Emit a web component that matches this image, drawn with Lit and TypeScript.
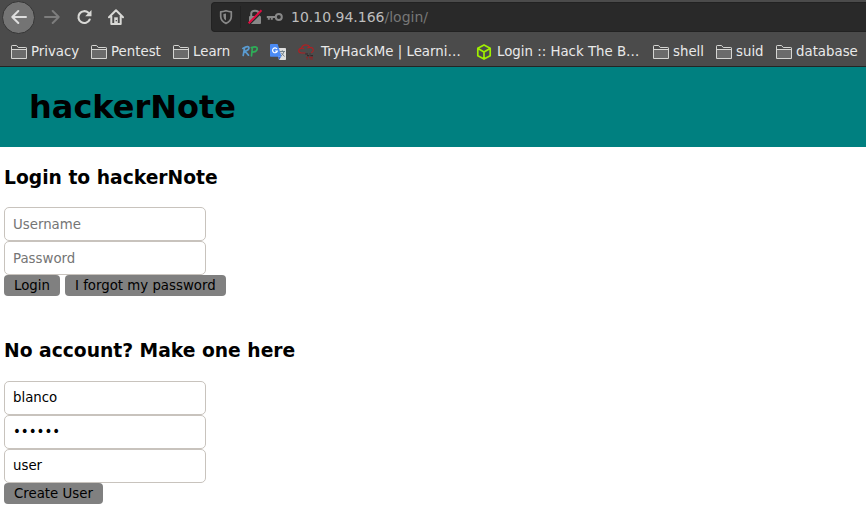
import { LitElement, html, css, svg } from "lit";
import { customElement } from "lit/decorators.js";
import { styleMap } from "lit/directives/style-map.js";

const folder = svg`<path d="M.5 13.5V1.2Q.5.5 1.2.5H5.6L7.2 2.5H14.8Q15.5 2.5 15.5 3.1V13.5Z" fill="#4b4b4b" stroke="#d5d5d2"/><path d="M1 5H15V13H1Z" fill="#6b6b6b"/><path d="M.5 4.5H15.5" stroke="#d5d5d2"/>`;

const rp = svg`<g fill="none" stroke-width="1.7" stroke-linecap="round" stroke-linejoin="round"><path d="M2.7 3.5L1.2 11.5M.8 4.4Q6.7 1.1 7 3.8Q7 6.3 2.5 7.4Q5 9 6.5 11.2" stroke="#5a9bd0"/><path d="M10.4 3.6L9.5 11.8M9.3 3.6Q15.5 1.8 15.2 5Q14.6 8 10.1 8.1" stroke="#2eae58"/></g>`;

const translate = svg`<path d="M6 4H15.2Q16 4 16 4.8V15.2Q16 16 15.2 16H9Z" fill="#e0e0e0"/><path d="M8 12.7H11L9.2 16Z" fill="#3367d6"/><path d="M.8 0H7.6L11.6 12.7H.8Q0 12.7 0 11.9V.8Q0 0 .8 0Z" fill="#4b8bf5"/><path d="M7 5A2.4 2.4 0 1 0 7.3 7H5.1" fill="none" stroke="#fff" stroke-width="1.2"/><path d="M9.8 7.5H15M12.3 6.3V7.5M14 7.6Q13 10.8 10.8 12M11.2 8.8L14.5 12.5" fill="none" stroke="#72808b"/>`;

const cloud = svg`<path d="M7.5 9H3.5Q.6 8.7.7 6.5Q.9 4.5 3.3 4.3Q4.5.8 8 .9Q10.8 1 11.9 3.4Q15.3 3.5 15.3 6.3Q15.2 8 13.2 8.8M3.3 4.3Q5 4 6 5M11.9 3.4Q10.4 3.2 9.4 4.2" fill="none" stroke="#b01f22" stroke-width="1.2"/><path d="M7.2 10H10M11.5 10H12.5M9 11.7H11.3M12.4 11.7H15" stroke="#33292a" stroke-width="1.2"/><path d="M8.2 13.3H10M11 13.3H14.8M8.6 15H10M11.5 15H15" stroke="#8e2427" stroke-width="1.2"/>`;

const cube = svg`<path d="M8 .9L14.2 4.2V11.7L8 15.1L1.8 11.7V4.2ZM2 4.4L8 7.9L14 4.4M8 7.9V15" fill="none" stroke="#9fef00" stroke-width="1.7" stroke-linejoin="round"/>`;

// Each slot is the distance from one icon to the next; gap sits between icon and label.
const bookmarks = [
  { icon: folder, label: "Privacy", slot: 80, gap: 4 },
  { icon: folder, label: "Pentest", slot: 82, gap: 4 },
  { icon: folder, label: "Learn", slot: 69, gap: 4 },
  { icon: rp, label: "", slot: 28, gap: 0 },
  { icon: translate, label: "", slot: 28, gap: 0 },
  { icon: cloud, label: "TryHackMe | Learni…", slot: 178, gap: 7 },
  { icon: cube, label: "Login :: Hack The B…", slot: 177, gap: 5 },
  { icon: folder, label: "shell", slot: 63, gap: 4 },
  { icon: folder, label: "suid", slot: 60, gap: 4 },
  { icon: folder, label: "database", slot: 90, gap: 4 },
];

@customElement("browser-chrome")
class BrowserChrome extends LitElement {
  static styles = css`
    :host { display: block; box-sizing: border-box; height: 67px; background: #4b4b4b; border-bottom: 1px solid #242424; overflow: hidden; }
    .nav { display: flex; align-items: center; height: 34px; }
    svg { display: block; flex: none; }
    .back { box-sizing: border-box; width: 33px; height: 33px; margin-left: 2px; border: 1px solid #353535; border-radius: 50%; background: #747474; display: grid; place-items: center; }
    .forward { margin-left: 9px; }
    .reload { margin-left: 16px; }
    .home { margin-left: 16px; }
    .url { box-sizing: border-box; display: flex; align-items: center; flex: 1; height: 30px; margin-left: 87px; border: 1px solid #222; border-right: 0; border-radius: 4px 0 0 4px; background: #292929; color: #777; font-size: 14px; white-space: pre; }
    .shield { margin-left: 6px; }
    .sep { width: 1px; height: 22px; margin-left: 6px; background: #222; }
    .lock { margin-left: 6px; }
    .key { margin-left: 3px; }
    .address { margin-left: 8px; }
    .host { color: #bdbdbd; }
    .marks { display: flex; height: 34px; padding-left: 11px; }
    .mark { display: flex; align-items: center; flex: none; color: #e9e9e9; font-size: 13.33px; line-height: 16px; white-space: pre; }
    .mark svg { margin-top: 2px; overflow: visible; }
    .mark span { padding-top: 2px; }
  `;
  render() {
    return html`
      <div class="nav">
        <div class="back"><svg width="16" height="16" fill="none" stroke="#dedede" stroke-width="2" stroke-linecap="round" stroke-linejoin="round"><path d="M15 8H1.5M7.3 2L1.3 8L7.3 14"/></svg></div>
        <svg class="forward" width="16" height="16" fill="none" stroke="#7d7d7d" stroke-width="2" stroke-linecap="round" stroke-linejoin="round"><path d="M1 8H14.5M8.7 2L14.7 8L8.7 14"/></svg>
        <svg class="reload" width="16" height="16"><path d="M12.4 3.8A5.9 5.9 0 1 0 13.7 10.5" fill="none" stroke="#d9d9d6" stroke-width="2.1" stroke-linecap="round"/><path d="M15.5 1V7.2H9.2Z" fill="#d9d9d6"/></svg>
        <svg class="home" width="16" height="16"><path d="M1 8.2L8 1.2L15 8.2M3.3 7V15H12.7V7" fill="none" stroke="#d9d9d6" stroke-width="2" stroke-linecap="round" stroke-linejoin="round"/><path d="M6.2 8.3H9.8V15H6.2Z" fill="#d9d9d6"/><path d="M7.7 11H8.9V12.3H7.7Z" fill="#444"/></svg>
        <div class="url">
          <svg class="shield" width="16" height="16"><path d="M8 1.7Q11 2.6 13.3 2.8V7.5Q13.2 12.2 8 14.4Q2.8 12.2 2.7 7.5V2.8Q5 2.6 8 1.7Z" fill="none" stroke="#888" stroke-width="1.7" stroke-linejoin="round"/><path d="M8 4.5V11.5Q5.5 10.2 5.4 7V5.1Z" fill="#888"/></svg>
          <span class="sep"></span>
          <svg class="lock" width="16" height="16"><path d="M4.2 8V5Q4.2 1.7 8 1.7Q11.8 1.7 11.8 5V8" fill="none" stroke="#888" stroke-width="2"/><rect x="2" y="7" width="12" height="8" rx="1" fill="#888"/><path d="M2.6 15.2L15.2 2.6" stroke="#292929" stroke-width="1.6"/><path d="M1.6 14.2L14.5 1.3" stroke="#e20b3f" stroke-width="2"/></svg>
          <svg class="key" width="17" height="16" fill="none" stroke="#888" stroke-width="2"><circle cx="12.8" cy="8" r="3"/><path d="M9.8 8H.8M2.8 8V10.8M5.8 8V10.8"/></svg>
          <span class="address"><span class="host">10.10.94.166</span>/login/</span>
        </div>
      </div>
      <div class="marks">
        ${bookmarks.map((b) => html`<div class="mark" style=${styleMap({ width: `${b.slot}px`, gap: `${b.gap}px` })}>
          <svg width="16" height=${b.icon === folder ? 14 : 16} fill="none">${b.icon}</svg>${b.label ? html`<span>${b.label}</span>` : ""}</div>`)}
      </div>`;
  }
}

@customElement("app-root")
class AppRoot extends LitElement {
  static styles = css`
    :host { display: block; height: 517px; overflow: hidden; background: #fff; color: #000; font-family: "DejaVu Sans", sans-serif; }
    header { display: flex; align-items: center; height: 80px; padding-left: 29px; background: #008080; }
    h1 { margin: 0; font-size: 32px; line-height: 38px; }
    main { padding: 20px 4px 0; }
    h3 { margin: 0; font-size: 18.72px; line-height: 22px; }
    .fields { padding-top: 18px; }
    input { display: block; box-sizing: border-box; width: 202px; height: 34px; margin: 0; padding: 0 8px; border: 1px solid #c8c3bd; border-radius: 5px; background: #fff; color: #000; font: 13.333px "DejaVu Sans", sans-serif; outline: 0; }
    input::placeholder { color: #757575; opacity: 1; }
    .actions { display: flex; gap: 5px; }
    button { height: 21px; margin: 0; padding: 0 10px; border: 0; border-radius: 4px; background: #808080; color: #000; font: 13.333px "DejaVu Sans", sans-serif; line-height: 21px; }
    .signup { padding-top: 44px; }
    .signup .fields { padding-top: 19px; }
    .signup input { padding-bottom: 2px; }
  `;
  render() {
    return html`
      <browser-chrome></browser-chrome>
      <header><h1>hackerNote</h1></header>
      <main>
        <section>
          <h3>Login to hackerNote</h3>
          <div class="fields"><input placeholder="Username"><input type="password" placeholder="Password"></div>
          <div class="actions"><button>Login</button><button>I forgot my password</button></div>
        </section>
        <section class="signup">
          <h3>No account? Make one here</h3>
          <div class="fields"><input value="blanco"><input type="password" value="secret"><input value="user"></div>
          <div class="actions"><button>Create User</button></div>
        </section>
      </main>`;
  }
}
